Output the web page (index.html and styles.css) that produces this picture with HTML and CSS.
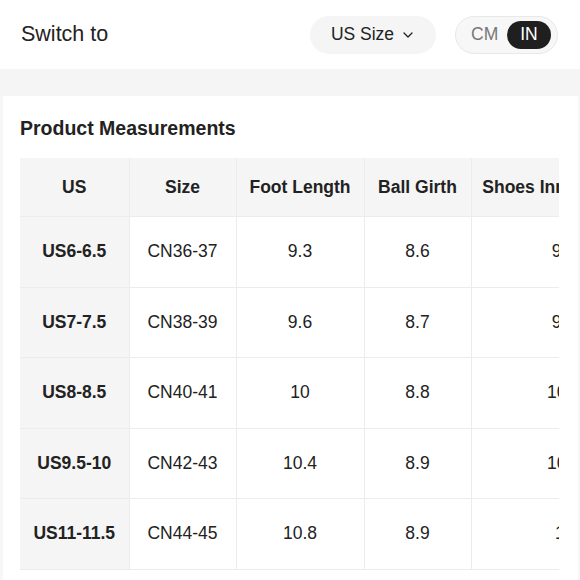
FILE: index.html
```html
<!DOCTYPE html>
<html>
<head>
<meta charset="utf-8">
<link rel="stylesheet" href="styles.css">
</head>
<body>
<header class="topbar">
  <div class="switch-label">Switch to</div>
  <div class="controls">
    <div class="select-pill">
      <span>US Size</span>
      <svg class="chev" width="10" height="6" viewBox="0 0 10 6"><path d="M1 1 L5 5 L9 1" fill="none" stroke="#222" stroke-width="1.3" stroke-linecap="round" stroke-linejoin="round"/></svg>
    </div>
    <div class="unit-toggle">
      <span class="unit">CM</span>
      <span class="unit active">IN</span>
    </div>
  </div>
</header>
<div class="band"></div>
<main class="panel">
  <h2 class="title">Product Measurements</h2>
  <div class="table-wrap">
    <table class="size-table">
      <colgroup>
        <col class="c1"><col class="c2"><col class="c3"><col class="c4"><col class="c5">
      </colgroup>
      <thead>
        <tr><th>US</th><th>Size</th><th>Foot Length</th><th>Ball Girth</th><th>Shoes Inner Length</th></tr>
      </thead>
      <tbody>
        <tr><td class="us">US6-6.5</td><td>CN36-37</td><td>9.3</td><td>8.6</td><td>9.8</td></tr>
        <tr><td class="us">US7-7.5</td><td>CN38-39</td><td>9.6</td><td>8.7</td><td>9.9</td></tr>
        <tr><td class="us">US8-8.5</td><td>CN40-41</td><td>10</td><td>8.8</td><td>10.2</td></tr>
        <tr><td class="us">US9.5-10</td><td>CN42-43</td><td>10.4</td><td>8.9</td><td>10.6</td></tr>
        <tr><td class="us">US11-11.5</td><td>CN44-45</td><td>10.8</td><td>8.9</td><td>11</td></tr>
      </tbody>
    </table>
  </div>
</main>
</body>
</html>
```
FILE: styles.css
```css
html, body {
  margin: 0;
  padding: 0;
  background: #ffffff;
  font-family: "Liberation Sans", Arial, sans-serif;
  color: #222222;
}

.topbar {
  height: 69px;
  display: flex;
  align-items: center;
  justify-content: space-between;
  padding: 0 22px 0 21px;
  box-sizing: border-box;
}

.switch-label {
  font-size: 21.5px;
  color: #222;
}

.controls {
  display: flex;
  align-items: center;
  gap: 19px;
}

.select-pill {
  width: 126px;
  height: 38px;
  border-radius: 19px;
  background: #f5f5f5;
  display: flex;
  align-items: center;
  justify-content: center;
  gap: 9px;
  font-size: 17.5px;
  color: #222;
  box-sizing: border-box;
  padding-right: 2px;
}

.chev {
  display: block;
  margin-top: 1px;
}

.unit-toggle {
  width: 103px;
  height: 38px;
  box-sizing: border-box;
  border: 1px solid #e8e8e8;
  border-radius: 19px;
  background: #f7f7f7;
  display: flex;
  align-items: center;
  justify-content: space-between;
  padding: 0 6px 0 15px;
}

.unit {
  font-size: 17.5px;
  color: #777;
}

.unit.active {
  width: 44px;
  height: 28px;
  border-radius: 14px;
  background: #1f1f1f;
  color: #ffffff;
  display: flex;
  align-items: center;
  justify-content: center;
}

.band {
  height: 27px;
  background: #f5f5f5;
}

.panel {
  border-left: 3px solid #f7f7f7;
  border-right: 2px solid #f7f7f7;
  padding: 20px 0 0 17px;
  min-height: 484px;
  box-sizing: border-box;
}

.title {
  margin: 0 0 18px 0;
  font-size: 19.5px;
  line-height: 24px;
  font-weight: bold;
  color: #222;
}

.table-wrap {
  width: 539px;
  overflow: hidden;
}

.size-table {
  border-collapse: collapse;
  table-layout: fixed;
  width: 637px;
  font-size: 17.5px;
}

.c1 { width: 109px; }
.c2 { width: 107px; }
.c3 { width: 128px; }
.c4 { width: 107px; }
.c5 { width: 186px; }

.size-table th,
.size-table td {
  border: 1px solid #ececec;
  text-align: center;
  white-space: nowrap;
  padding: 0;
  color: #222;
}

.size-table tr > :first-child {
  border-left: none;
}

.size-table thead tr > * {
  border-top: none;
}

.size-table thead th {
  height: 58px;
  background: #f5f5f5;
  font-weight: bold;
}

.size-table tbody td {
  height: 69.5px;
}

.size-table td.us {
  background: #f5f5f5;
  font-weight: bold;
}
```
